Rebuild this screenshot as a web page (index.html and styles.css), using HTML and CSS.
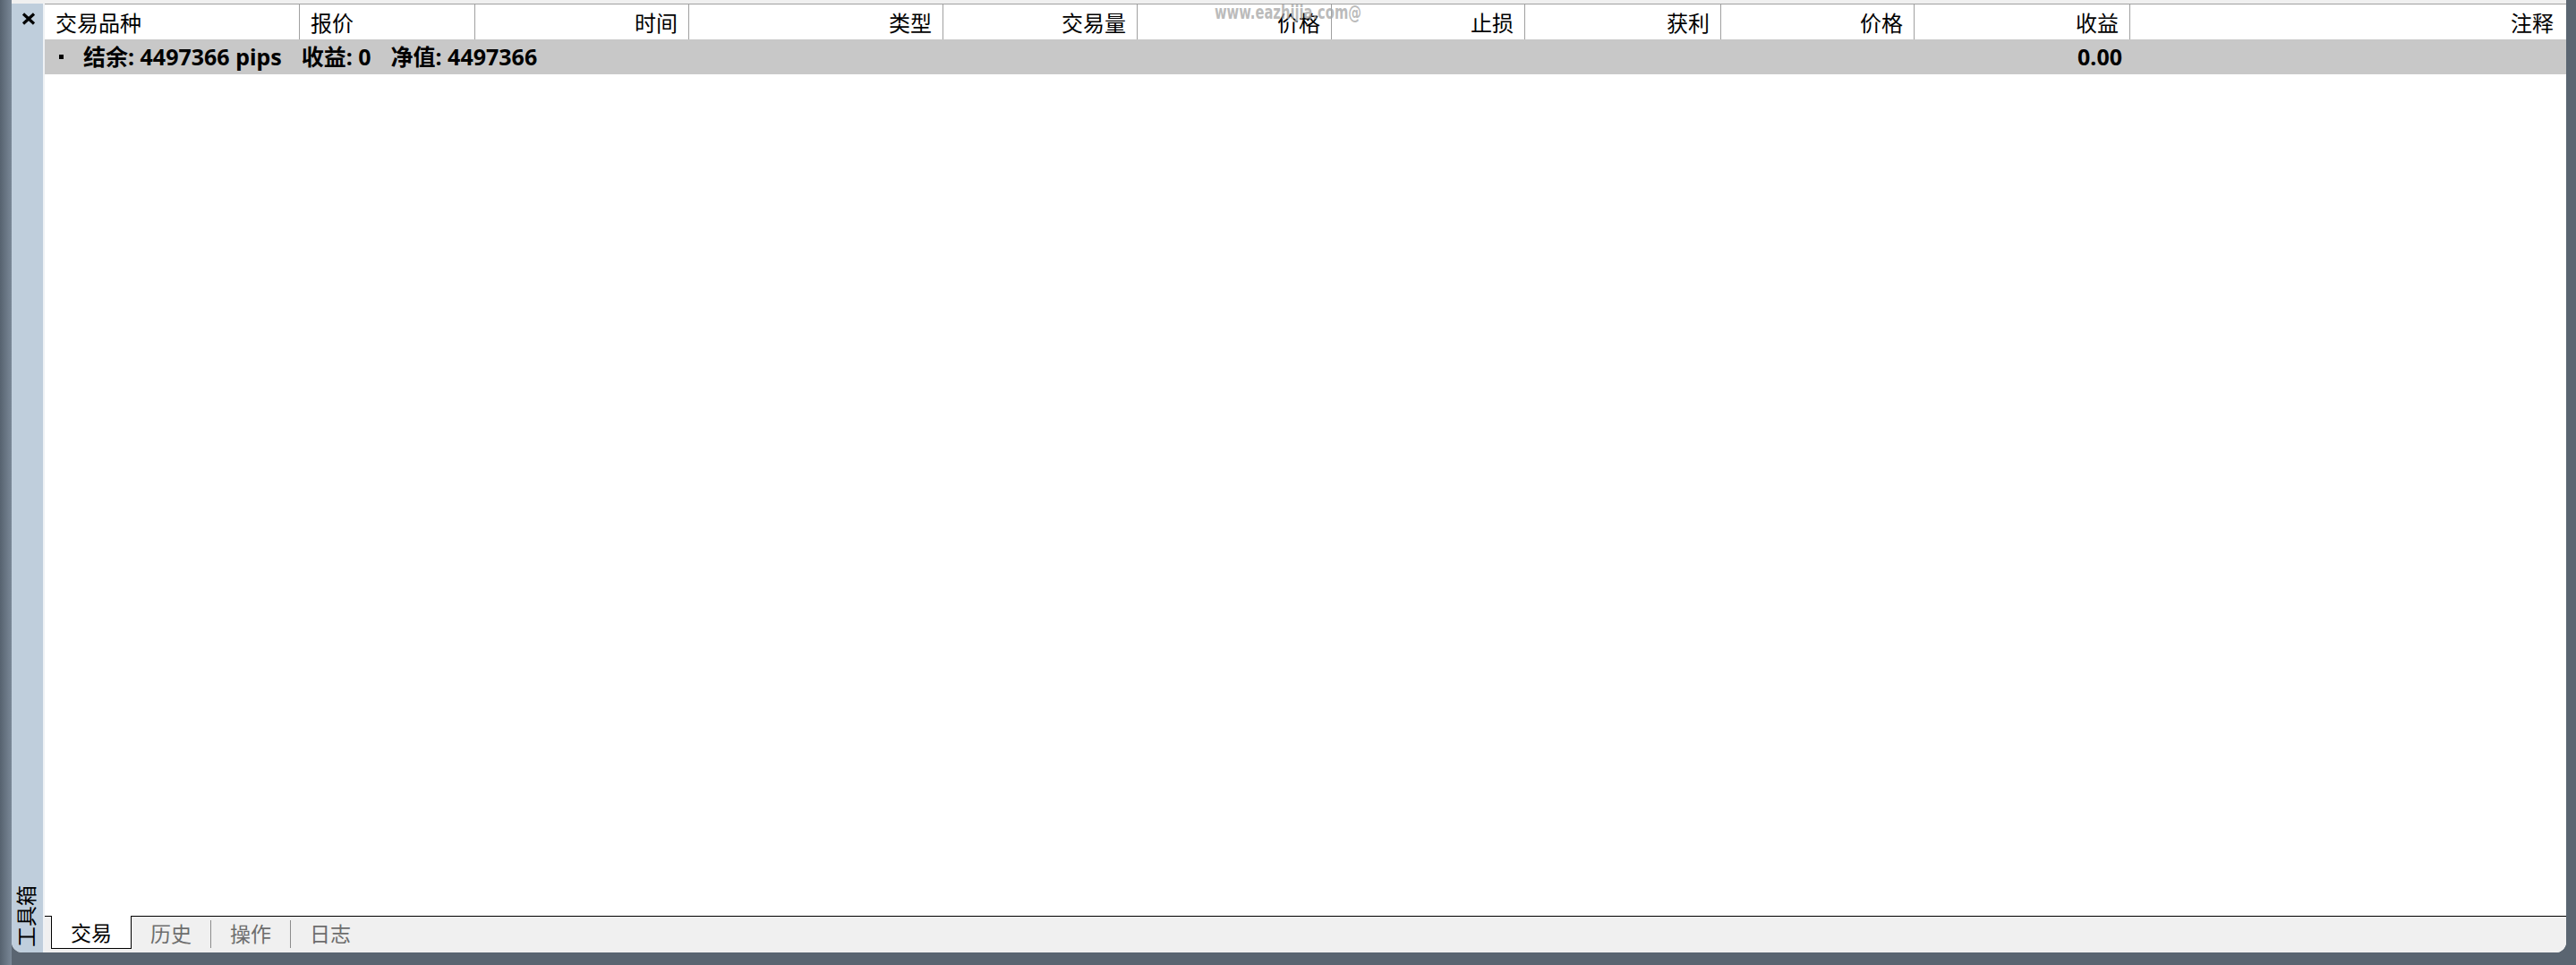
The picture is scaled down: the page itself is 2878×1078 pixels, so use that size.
FILE: index.html
```html
<!DOCTYPE html>
<html lang="zh-CN">
<head>
    <meta charset="UTF-8">
    <title>工具箱</title>
    <link rel="stylesheet" href="styles.css">
</head>
<body>
    <div class="window">
        <div class="top-strip"></div>
        <div class="frame">
            <!-- Side bar with close button and vertical title -->
            <aside class="sidebar">
                <span class="close">
                    <svg width="16" height="14" viewBox="0 0 16 14">
                        <path d="M2 1.5 L14 12.5 M14 1.5 L2 12.5" stroke="#000" stroke-width="3.2" fill="none"/>
                    </svg>
                </span>
                <span class="sidebar-title">工具箱</span>
            </aside>

            <main class="panel">
                <div class="list">
                    <div class="row head">
                        <div class="cell">交易品种</div>
                        <div class="cell">报价</div>
                        <div class="cell right">时间</div>
                        <div class="cell right">类型</div>
                        <div class="cell right">交易量</div>
                        <div class="cell right">价格</div>
                        <div class="cell right">止损</div>
                        <div class="cell right">获利</div>
                        <div class="cell right">价格</div>
                        <div class="cell right">收益</div>
                        <div class="cell right last">注释</div>
                    </div>
                    <div class="row summary">
                        <div class="summary-info">
                            <span class="dot"></span>
                            <span class="part">结余: 4497366 pips</span>
                            <span class="part">收益: 0</span>
                            <span class="part">净值: 4497366</span>
                        </div>
                        <div class="cell right profit">0.00</div>
                        <div class="cell"></div>
                    </div>
                </div>

                <!-- Bottom tabs -->
                <div class="tabs">
                    <div class="tab active">交易</div>
                    <div class="tab">历史</div>
                    <div class="tab divided">操作</div>
                    <div class="tab divided">日志</div>
                </div>
            </main>
        </div>
        <div class="watermark">www.eazhijia.com@</div>
    </div>
</body>
</html>
```

FILE: styles.css
```css
body {
    margin: 0;
    height: 100vh;
    overflow: hidden;
    background: linear-gradient(90deg, #56626f 0, #7a8897 13px, #5a6571 13px);
    font-family: "Noto Sans", "Noto Sans CJK SC", sans-serif;
    color: #000;
}

.window {
    position: relative;
    margin-left: 13px;
    width: 2854px;
    height: 1064px;
    background-color: #f0f0f0;
    border-radius: 0 0 12px 12px;
    overflow: hidden;
    display: flex;
    flex-direction: column;
}

.top-strip {
    flex: none;
    height: 4px;
}

.frame {
    flex: 1;
    min-height: 0;
    display: flex;
}

.sidebar {
    flex: none;
    width: 37px;
    background-color: #bfcedc;
    border-right: 2px solid #eef1f4;
    display: flex;
    flex-direction: column;
    align-items: center;
    justify-content: space-between;
    padding: 10px 0 6px 0;
    box-sizing: border-box;
}

.close {
    display: flex;
    padding-left: 2px;
}

.sidebar-title {
    writing-mode: vertical-rl;
    text-orientation: sideways;
    transform: rotate(180deg);
    font-size: 23px;
    line-height: 1;
    margin-left: -3px;
}

.panel {
    flex: 1;
    display: flex;
    flex-direction: column;
    border-top: 1px solid #a0a0a0;
    background-color: #fff;
}

.list {
    flex: 1;
}

.row {
    display: grid;
    grid-template-columns: 285px 196px 239px 284px 217px 217px 216px 219px 216px 241px 1fr;
    height: 39px;
}

.cell {
    display: flex;
    align-items: center;
    padding: 0 12px;
    box-sizing: border-box;
    white-space: nowrap;
}

.cell.right {
    justify-content: flex-end;
}

.head .cell {
    font-size: 24px;
    line-height: 1;
    border-right: 1px solid #a0a0a0;
    padding-top: 2px;
}

.head .cell.last {
    border-right: none;
    padding-right: 14px;
}

.summary {
    background-color: #c8c8c8;
    font-weight: bold;
    font-size: 25px;
    line-height: 1;
}

.summary-info {
    grid-column: 1 / 10;
    display: flex;
    align-items: center;
    white-space: nowrap;
    padding-left: 16px;
}

.dot {
    width: 5px;
    height: 5px;
    background-color: #000;
    margin-right: 22px;
}

.part {
    margin-right: 22px;
}

.profit {
    padding-right: 9px;
}

.tabs {
    flex: none;
    height: 40px;
    border-top: 1px solid #000;
    background-color: #f0f0f0;
    display: flex;
    align-items: flex-start;
    padding-left: 7px;
}

.tab {
    height: 31px;
    margin-top: 4px;
    padding: 0 21px;
    display: flex;
    align-items: center;
    font-size: 23px;
    line-height: 1;
    color: #6d6d6d;
    box-sizing: border-box;
}

.tab.divided {
    border-left: 1px solid #8c8c8c;
}

.tab.active {
    margin-top: -1px;
    height: 37px;
    padding-top: 3px;
    background-color: #fff;
    color: #000;
    border: 1px solid #000;
    border-top: none;
}

/* site watermark laid over the header */
.watermark {
    position: absolute;
    left: 1344px;
    top: 4px;
    font-family: "DejaVu Sans Condensed", "DejaVu Sans", sans-serif;
    font-stretch: condensed;
    font-weight: bold;
    font-size: 21px;
    line-height: 1;
    color: rgba(165, 165, 165, 0.75);
    transform: scaleX(0.78);
    transform-origin: left top;
    pointer-events: none;
}
```
